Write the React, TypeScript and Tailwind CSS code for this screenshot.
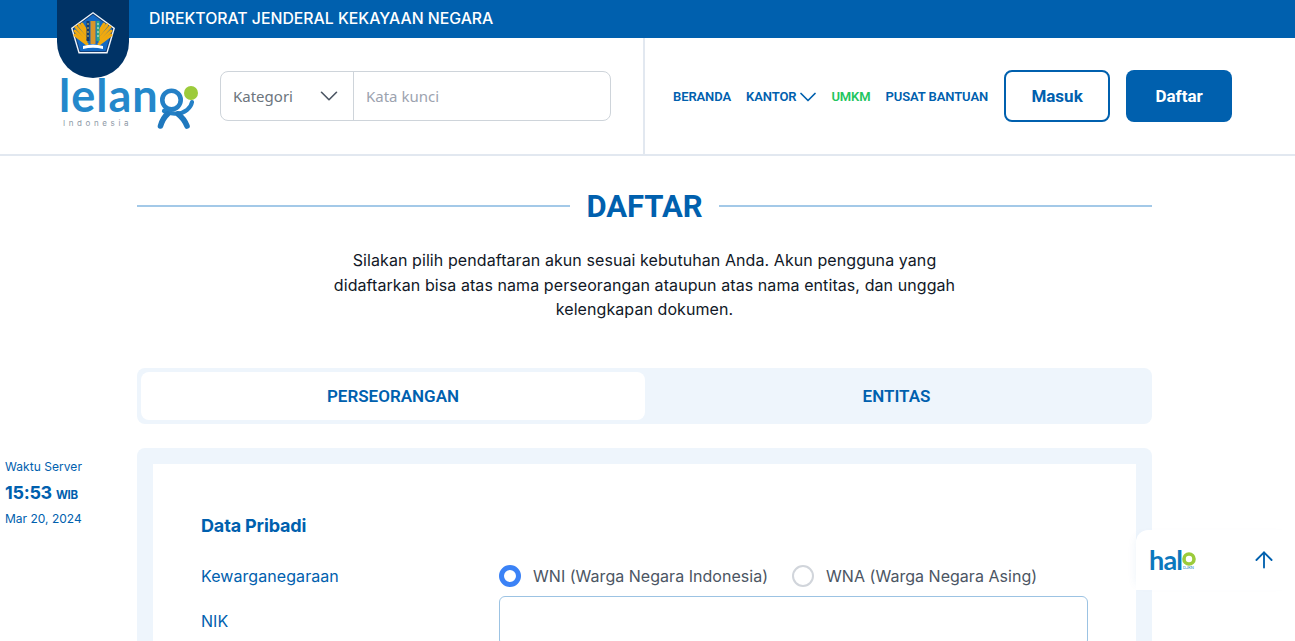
import { ChevronDown, ArrowUp } from 'lucide-react';

function Emblem() {
    const leftFeathers = ['M16 32 L4 23', 'M15 29 L4 19', 'M15 26 L5 15', 'M16 23 L8 13', 'M16 20 L11 12'];
    const rightFeathers = ['M28 32 L40 23', 'M29 29 L40 19', 'M29 26 L39 15', 'M28 23 L36 13', 'M28 20 L33 12'];
    return (
        <svg width="44" height="42" viewBox="0 0 44 42">
            <path d="M22 0 L44 16 L36.5 41.5 L7.5 41.5 L0 16 Z" fill="#f4f7fb" />
            <path d="M22 1.6 L42.4 16.5 L35.5 40 L8.5 40 L1.6 16.5 Z" fill="#123f78" />
            <path d="M22 2.8 L41.2 16.8 L34.6 39 L9.4 39 L2.8 16.8 Z" fill="#1269c4" />
            {leftFeathers.map((d, i) => (
                <path key={i} d={d} stroke="#f0a90e" strokeWidth="3" strokeLinecap="round" />
            ))}
            {rightFeathers.map((d, i) => (
                <path key={i} d={d} stroke="#f0a90e" strokeWidth="3" strokeLinecap="round" />
            ))}
            <rect x="19.5" y="9" width="5" height="23" fill="#d9962a" />
            <rect x="15.5" y="9" width="3" height="20" fill="#163a6b" />
            <path d="M16 12 H18 M16 16 H18 M16 20 H18 M16 24 H18" stroke="#d9c25a" strokeWidth="1" />
            <rect x="25.5" y="9" width="3" height="20" fill="#2aa88c" />
            <path d="M26 12 H28 M26 16 H28 M26 20 H28 M26 24 H28" stroke="#e6f2e0" strokeWidth="1" />
            <path d="M12 34 Q22 31 32 34 L32 37 Q22 34.5 12 37 Z" fill="#fff" />
        </svg>
    );
}

function LelangFigure() {
    return (
        <svg width="44" height="56" viewBox="0 0 44 56" className="absolute left-[98px] top-0">
            <circle cx="34" cy="18" r="7" fill="#9ccb3b" />
            <circle cx="14.5" cy="25" r="9.2" fill="none" stroke="#2480c6" strokeWidth="4.6" />
            <path d="M35 27 C34 33 28 38 20 38.5 C15 39 11 38 7 36" fill="none" stroke="#2480c6" strokeWidth="4.2" strokeLinecap="round" />
            <path d="M10.5 39 C7 42 5 46 3.5 51" fill="none" stroke="#1f78be" strokeWidth="5.6" strokeLinecap="round" />
            <path d="M21 39 C25 42 28 46 30 51" fill="none" stroke="#1f78be" strokeWidth="5.6" strokeLinecap="round" />
        </svg>
    );
}

function Logo() {
    return (
        <div className="relative w-[140px] h-[60px] shrink-0">
            <span className="block text-[45px] leading-[40px] text-[#2488cb] font-['Lato'] font-bold tracking-[1px]">lelan</span>
            <span className="absolute left-[4px] top-[43px] text-[8px] leading-[10px] tracking-[3.6px] text-[#8e99a6]">Indonesia</span>
            <LelangFigure />
        </div>
    );
}

function Radio({ checked, label }: { checked: boolean; label: string }) {
    return (
        <label className="flex items-center gap-3 text-[16px] tracking-[0.03px] text-[#4b5563]">
            {checked ? (
                <span className="w-[22px] h-[22px] rounded-full border-[5px] border-[#3b82f6] bg-white" />
            ) : (
                <span className="w-[22px] h-[22px] rounded-full border-2 border-[#d1d5db] bg-white" />
            )}
            {label}
        </label>
    );
}

export default function App() {
    return (
        <div className="relative w-full h-[641px] overflow-hidden bg-white font-['Inter',sans-serif]">
            <div className="h-[38px] bg-[#0060ae] pl-[149px] flex items-center text-white text-[15.8px] font-medium">
                DIREKTORAT JENDERAL KEKAYAAN NEGARA
            </div>

            <div className="absolute left-[57px] top-0 w-[72px] h-[78px] bg-[#003366] rounded-b-[36px] flex justify-center pt-[12px]">
                <Emblem />
            </div>

            <header className="h-[118px] flex border-b-2 border-[#e2e8f0]">
                <div className="w-[645px] border-r-2 border-[#e2e8f0] flex pl-[59px] pt-[37px] gap-[21px]">
                    <Logo />
                    <div className="flex h-[50px] w-[391px] -mt-[4px] border border-[#ced4da] rounded-lg text-[15px] font-['Noto_Sans',sans-serif]">
                        <div className="w-[133px] border-r border-[#ced4da] flex items-center justify-between pl-3 pr-4 text-[#6c757d]">
                            Kategori
                            <ChevronDown size={30} strokeWidth={1.3} className="text-[#4b5563] -mr-[7px]" />
                        </div>
                        <div className="flex-1 flex items-center pl-3 text-[#9ca3af]">Kata kunci</div>
                    </div>
                </div>
                <nav className="flex items-center pl-[28px] font-['Roboto',sans-serif] text-[13px] tracking-[-0.1px] font-semibold text-[#0060ae]">
                    <span className="mt-px">BERANDA</span>
                    <span className="mt-px ml-[15px] flex items-center gap-[5px]">KANTOR <ChevronDown size={28} strokeWidth={1.5} className="-mx-[7px]" /></span>
                    <span className="mt-px ml-[16px] text-[#22c55e]">UMKM</span>
                    <span className="mt-px ml-[15px]">PUSAT BANTUAN</span>
                    <button className="ml-[16px] w-[106px] h-[52px] pt-[2px] rounded-lg border-2 border-[#0060ae] text-[17px] tracking-normal font-bold">Masuk</button>
                    <button className="ml-[16px] w-[106px] h-[52px] pt-[2px] rounded-lg bg-[#0060ae] text-white text-[17px] tracking-normal font-bold">Daftar</button>
                </nav>
            </header>

            <main className="w-[1015px] ml-[137px]">
                <div className="flex items-center gap-4 mt-[32px] h-[36px]">
                    <div className="flex-1 h-[2px] bg-[#a3c9e8]" />
                    <h1 className="pt-[2px] font-['Roboto',sans-serif] text-[31px] font-bold text-[#0060ae]">DAFTAR</h1>
                    <div className="flex-1 h-[2px] bg-[#a3c9e8]" />
                </div>
                <p className="w-[640px] mx-auto mt-[24px] text-center text-[16px] tracking-[0.08px] leading-[24.5px] text-[#111827]">
                    Silakan pilih pendaftaran akun sesuai kebutuhan Anda. Akun pengguna yang didaftarkan bisa atas nama perseorangan ataupun atas nama entitas, dan unggah kelengkapan dokumen.
                </p>

                <div className="mt-[46px] h-[56px] bg-[#eef5fc] rounded-lg p-1 flex text-[17px] font-semibold text-[#0060ae] font-['Roboto',sans-serif]">
                    <div className="w-[504px] pt-[2px] bg-white rounded-lg flex items-center justify-center">PERSEORANGAN</div>
                    <div className="flex-1 pt-[2px] flex items-center justify-center">ENTITAS</div>
                </div>

                <div className="mt-6 bg-[#eef5fc] rounded-lg p-4">
                    <div className="bg-white pt-[48px] px-12 h-[400px]">
                        <h2 className="text-[18px] leading-[28px] font-bold tracking-[-0.15px] text-[#0060ae]">Data Pribadi</h2>
                        <div className="grid grid-cols-[298px_1fr] mt-[23px] text-[16px] tracking-[0.07px] text-[#0060ae]">
                            <div className="leading-[24px] pt-[1px]">Kewarganegaraan</div>
                            <div className="flex gap-[24px] h-[24px] items-center mt-[1px]">
                                <Radio checked label="WNI (Warga Negara Indonesia)" />
                                <Radio checked={false} label="WNA (Warga Negara Asing)" />
                            </div>
                            <div className="leading-[24px] mt-[21px]">NIK</div>
                            <div className="h-[50px] mt-[8px] border border-[#9cc3e3] rounded-md" />
                        </div>
                    </div>
                </div>
            </main>

            <div className="absolute left-[5px] top-[459px] text-[#0060ae]">
                <div className="text-[12px] leading-[16px] tracking-[0.05px]">Waktu Server</div>
                <div className="mt-[6px] text-[18px] leading-[24px] font-bold tracking-[-0.3px]">15:53 <span className="text-[11.5px]">WIB</span></div>
                <div className="mt-[4px] text-[12px] leading-[16px]">Mar 20, 2024</div>
            </div>

            <div className="absolute right-0 top-[530px] w-[159px] h-[60px] bg-white rounded-tl-xl shadow-[-6px_0_10px_-6px_rgba(0,96,174,0.08)] flex items-center">
                <div className="relative ml-[13px] w-[46px] h-[20px]">
                    <span className="absolute left-0 top-0 text-[27px] leading-[20px] font-bold tracking-[-0.8px] text-[#0c78bd] font-['Lato']">hal</span>
                    <svg width="14" height="14" viewBox="0 0 14 14" className="absolute left-[33px] top-[2px]">
                        <circle cx="7" cy="7" r="5" fill="none" stroke="#9ccb3b" strokeWidth="3.6" />
                    </svg>
                    <span className="absolute left-[34px] top-[16px] text-[4px] leading-[4px] text-[#0c78bd]">DJKN</span>
                </div>
                <ArrowUp size={26} strokeWidth={1.7} className="ml-[56px] text-[#0060ae]" />
            </div>
        </div>
    );
}
